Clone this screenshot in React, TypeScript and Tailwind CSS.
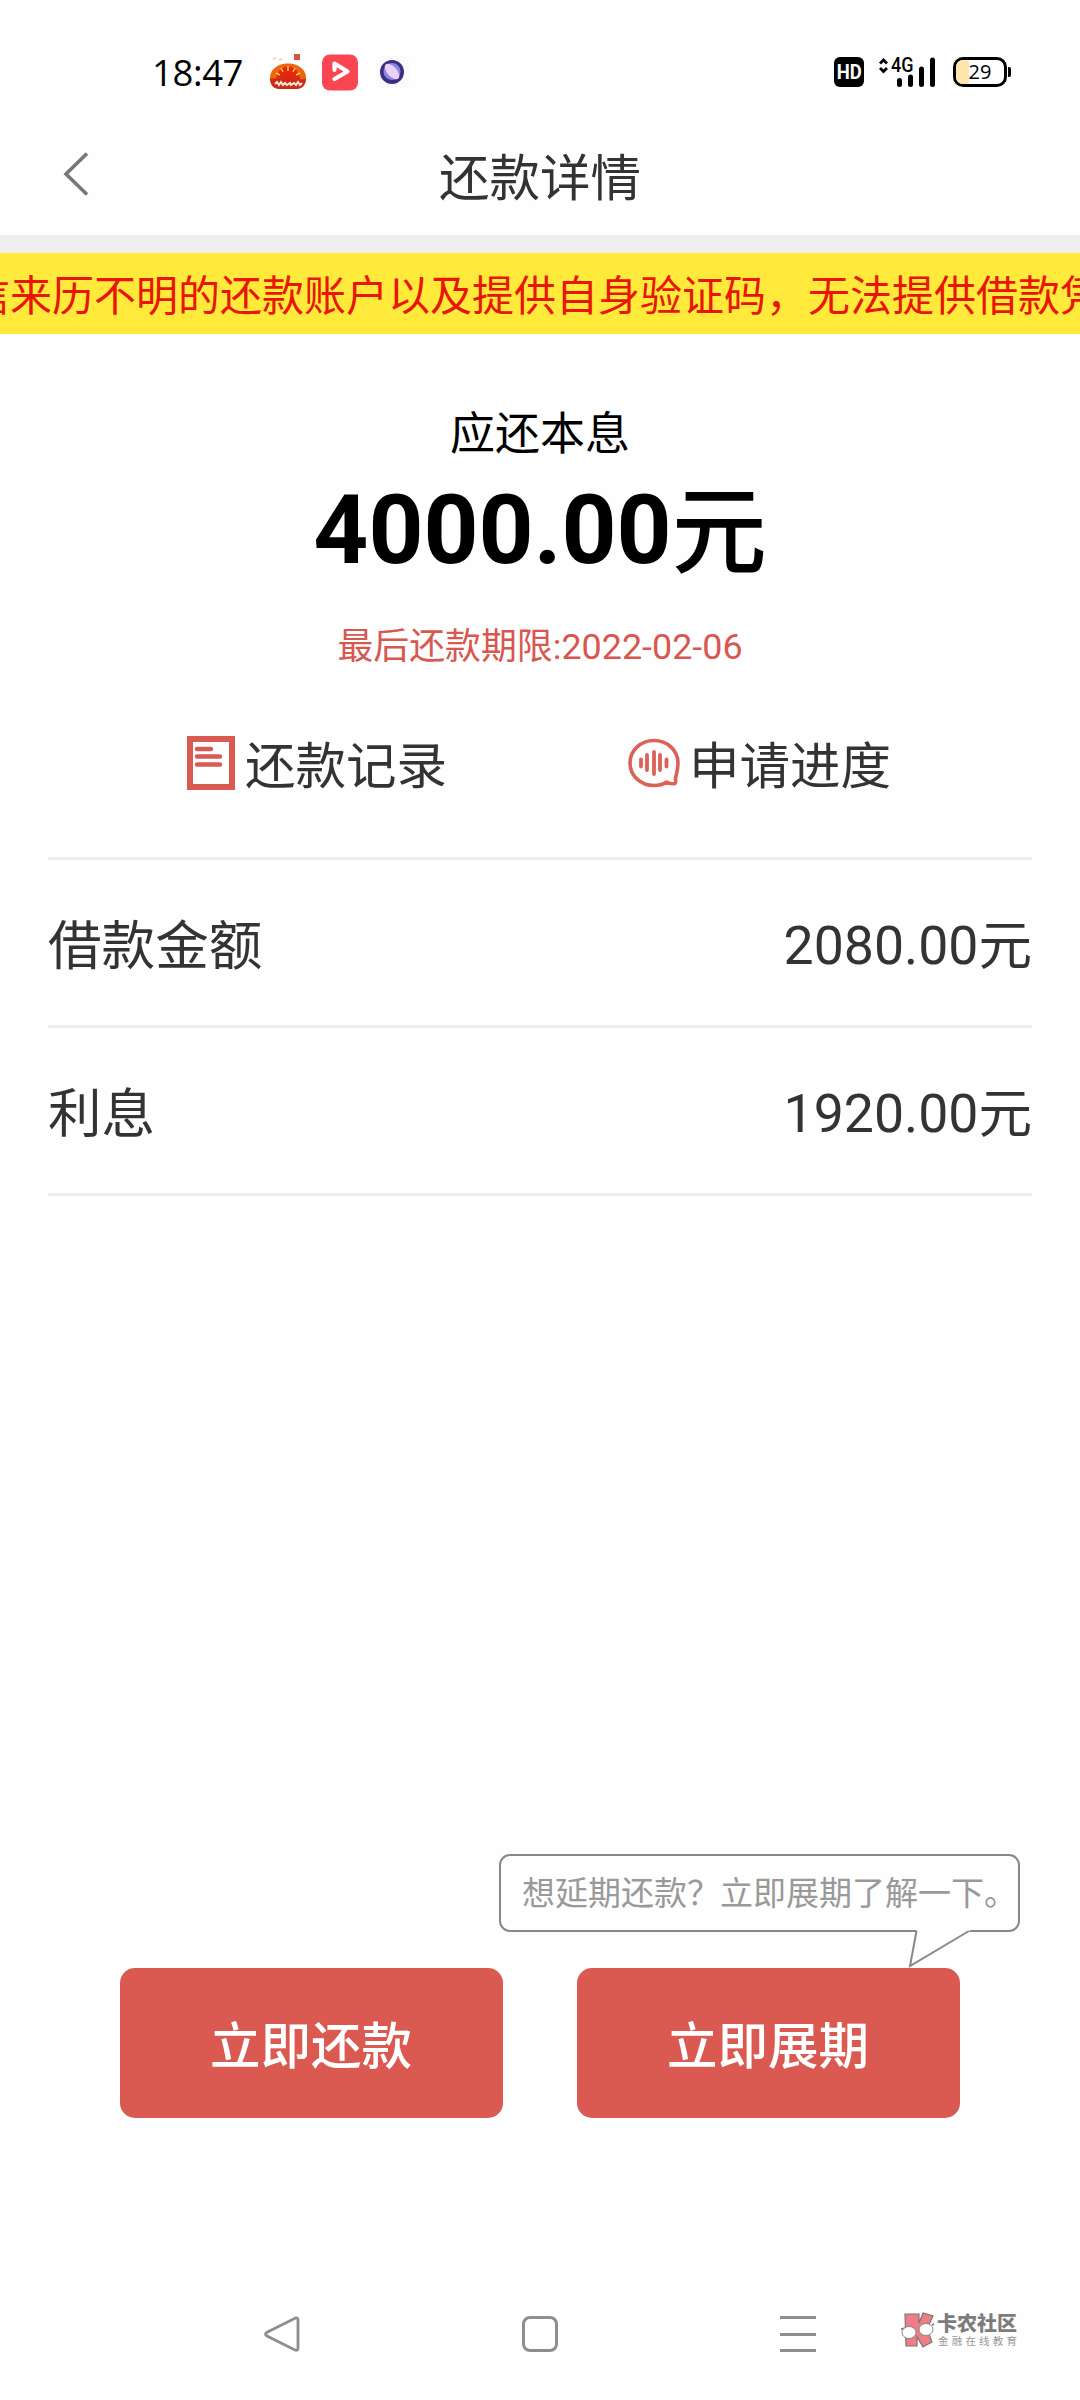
import React from "react";

function StatusBar() {
  return (
    <div className="flex h-[144px] items-center pr-[69px] pl-[152px]">
      <span className="w-[92px] font-['Open_Sans'] text-[36.500px] leading-[44px] font-normal tracking-[-0.400px] whitespace-nowrap text-black">18:47</span>
      <svg className="ml-[24px]" width="40" height="44" viewBox="0 0 40 44">
        <rect x="26" y="4" width="6" height="6" fill="#d2563a" />
        <path d="M5 9l3-1M11 10l3-1" stroke="#f3c9a0" strokeWidth="1.5" />
        <path d="M2 30C0 8 40 8 38 30z" fill="#f0640f" />
        <path d="M8 30C9 12 31 12 32 30z" fill="#e3260d" />
        <path d="M20 16v5M13 18l2 4M27 18l-2 4M8 23l4 2M32 23l-4 2" stroke="#ffd24a" strokeWidth="1.5" />
        <path d="M2 29c6-2 8 1 12 0s8-1 12 0 8 0 12 0c0 6-4 10-9 10H11C6 39 2 35 2 29z" fill="#cf281c" />
        <path d="M7 34l2-2 2 3 2-3 2 3 2-2 2 2 3-2 1 2 3-2 2 2 2-3 2 3 2-2" stroke="#ffe9d0" strokeWidth="2" fill="none" />
      </svg>
      <svg className="ml-[13px]" width="38" height="38" viewBox="0 0 38 38">
        <rect x="1" y="1.500" width="36" height="36" rx="8" fill="#fa4650" />
        <path d="M13.500 17V10.500L26.500 18.500l-13 7.500" fill="none" stroke="#fff" strokeWidth="4.200" strokeLinejoin="round" strokeLinecap="round" />
      </svg>
      <svg className="ml-[17px]" width="34" height="36" viewBox="0 0 34 36">
        <rect x="1" y="2" width="32" height="32" rx="8" fill="#faf9fb" />
        <circle cx="16" cy="18" r="12" fill="#3b2f80" />
        <circle cx="16" cy="17.500" r="8.500" fill="#8b87e8" />
        <ellipse cx="16" cy="17.500" rx="9.500" ry="4.800" transform="rotate(48 16 17.500)" fill="#ecd2f8" />
      </svg>

      <div className="ml-auto flex items-center">
        <div className="flex h-[30px] w-[30px] items-center justify-center rounded-[6px] bg-black">
          <span className="scale-x-[0.88] font-['Roboto'] text-[21px] leading-[30px] font-bold text-white">HD</span>
        </div>
        <div className="relative ml-[14px] h-[32px] w-[60px]">
          <svg width="60" height="32" viewBox="0 0 60 32">
            <path d="M2 7.500l3.500-3.500L9 7.500M2 12l3.500 3.500L9 12" fill="none" stroke="#000" strokeWidth="2.800" />
            <path d="M21.500 24.500v4M32.500 21v7.500M43.500 13v15.500M54.500 4v24.500" stroke="#000" strokeWidth="5" strokeLinecap="round" />
          </svg>
          <span className="absolute top-[-1px] left-[13px] origin-left scale-x-[0.9] font-['Roboto'] text-[20px] leading-[20px] font-medium text-black">4G</span>
        </div>
        <div className="relative ml-[15px] flex h-[30px] w-[54px] items-center justify-center overflow-hidden rounded-[10px] border-[3px] border-black">
          <div className="absolute inset-y-0 left-0 w-[13px] bg-[#ffe5ae]" />
          <span className="relative font-['Open_Sans'] text-[20px] leading-[24px] text-black">29</span>
        </div>
        <div className="ml-[1px] h-[10px] w-[3px] rounded-r-[2px] bg-black" />
      </div>
    </div>
  );
}

function RecordIcon() {
  return (
    <svg className="mt-[4px]" width="48" height="54" viewBox="0 0 48 54">
      <rect x="3" y="3" width="42" height="48" fill="#fff" stroke="#d95a51" strokeWidth="6" />
      <path d="M10 13h14M10 20.500h23M10 28.500h23" stroke="#d95a51" strokeWidth="4.400" strokeLinecap="round" />
    </svg>
  );
}

function ProgressIcon() {
  return (
    <svg className="mt-[6px]" width="52" height="50" viewBox="0 0 52 50">
      <path d="M47.500 40C49 34 50 31 50 25C50 12 39 2.500 26 2.500S2 12 2 25s11 22.500 24 22.500c5 0 9-1 12.500-3.500 2 1.500 5 2.200 8.500 1.500 1.200-.5.500-3 .5-5.500z" fill="none" stroke="#dc6157" strokeWidth="3.600" strokeLinejoin="round" />
      <path d="M13 21.500v7M19 17v15M26 14v22M32 17v15M38.500 21.500v7" stroke="#dc6157" strokeWidth="3.800" strokeLinecap="round" />
    </svg>
  );
}

function DetailRow({ label, value, unit }: { label: string; value: string; unit: string }) {
  return (
    <div className="flex h-[168px] items-center justify-between border-t-[3px] border-[#eeeeee] pt-[8px] text-[53.600px] leading-[60px] text-[#333]">
      <span className="pt-[1px]">{label}</span>
      <span className="flex">
        {value}
        <span className="pt-[1px]">{unit}</span>
      </span>
    </div>
  );
}

function ActionButton({ children }: { children: React.ReactNode }) {
  return (
    <button className="h-[150px] w-[383px] rounded-[15px] bg-[#da5a51] pt-[8px] pr-[1px] text-[50.500px] leading-[60px] font-medium text-white">
      {children}
    </button>
  );
}

function NavigationBar() {
  return (
    <div className="flex h-[80px] items-center pl-[262px]">
      <svg width="40" height="40" viewBox="0 0 40 40">
        <path d="M5 18.200L33 4.200q3-1 3 2V34q0 3-3 2L5 22q-3-1.900 0-3.800z" fill="none" stroke="#8e8e8e" strokeWidth="2.800" />
      </svg>
      <div className="ml-[220px] h-[36px] w-[36px] rounded-[8px] border-[3px] border-[#8e8e8e]" />
      <div className="ml-[222px] flex w-[36px] flex-col gap-[13.500px]">
        <div className="h-[3px] bg-[#8e8e8e]" />
        <div className="h-[3px] bg-[#8e8e8e]" />
        <div className="h-[3px] bg-[#8e8e8e]" />
      </div>
      <svg className="mb-[8px] ml-[84px]" width="36" height="38" viewBox="0 0 36 38">
        <path d="M5 3h14v9l4-10 10 3-6 13 5 13-9 5-6-10v9H6z" fill="#ee7d86" stroke="#777" strokeWidth="1.200" />
        <path d="M1 18l4-1M32 14l2-1" stroke="#777" strokeWidth="1.500" />
        <ellipse cx="9" cy="21.500" rx="7" ry="6" fill="#fff" stroke="#888" strokeWidth="1" />
        <ellipse cx="26" cy="18.500" rx="7" ry="6" fill="#fff" stroke="#888" strokeWidth="1" />
      </svg>
      <div className="mb-[6px] ml-[1px] flex flex-col">
        <span className="text-[20px] leading-[22px] font-black whitespace-nowrap text-[#7c7c7c]">卡农社区</span>
        <span className="pl-[1px] text-[10.500px] leading-[14px] tracking-[3.200px] whitespace-nowrap text-[#999]">金融在线教育</span>
      </div>
    </div>
  );
}

export default function App() {
  return (
    <div className="flex h-[2400px] w-[1080px] flex-col overflow-hidden bg-[#fefefe] font-['Roboto','Noto_Sans_CJK_SC',sans-serif]">
      <StatusBar />
      <header className="relative h-[91px] text-center">
        <svg className="absolute top-[6px] left-[60px]" width="32" height="48" viewBox="0 0 32 48">
          <path d="M27 3.500L6 24l21 20.500" fill="none" stroke="#777" strokeWidth="3.600" />
        </svg>
        <h1 className="text-[50.500px] leading-[70px] text-[#333]">还款详情</h1>
      </header>
      <div className="h-[18px] bg-[#eeeeee]" />
      <div className="h-[81px] overflow-hidden bg-[#ffe93b] pt-[14px]">
        <p className="ml-[-32px] text-[42px] leading-[60px] whitespace-nowrap text-[#e81500]">
          信来历不明的还款账户以及提供自身验证码，无法提供借款凭
        </p>
      </div>

      <section className="pt-[71px] text-center">
        <p className="text-[45px] leading-[60px] text-black">应还本息</p>
        <p className="mt-[15px] flex justify-center text-[96px] leading-[100px] font-bold text-black">
          4000.00
          <span className="pt-[4px] text-[95px] font-medium">元</span>
        </p>
        <p className="mt-[38px] text-[35.900px] leading-[50px] text-[#d8574e]">最后还款期限:2022-02-06</p>
      </section>

      <div className="mt-[60px] flex h-[70px] pl-[187px] text-[50.500px] leading-[70px] text-[#333]">
        <div className="flex w-[441px] gap-[10px]">
          <RecordIcon />
          <span>还款记录</span>
        </div>
        <div className="flex gap-[9px]">
          <ProgressIcon />
          <span>申请进度</span>
        </div>
      </div>

      <div className="mx-[48px] mt-[55px] border-b-[3px] border-[#eeeeee]">
        <DetailRow label="借款金额" value="2080.00" unit="元" />
        <DetailRow label="利息" value="1920.00" unit="元" />
      </div>

      <div className="relative mt-auto ml-[499px] h-[78px] w-[521px] rounded-[11px] border-2 border-[#888] pt-[8px] pl-[21px] text-[33px] leading-[60px] whitespace-nowrap text-[#999]">
        想延期还款？立即展期了解一下。
        <svg className="absolute top-[72px] left-[403px]" width="70" height="42" viewBox="0 0 70 42">
          <path d="M13 0L6.500 39 66 3V0z" fill="#fefefe" />
          <path d="M12.500 3L6 38 65 3" fill="none" stroke="#888" strokeWidth="2" />
        </svg>
      </div>
      <div className="mt-[36px] flex gap-[74px] pl-[120px]">
        <ActionButton>立即还款</ActionButton>
        <ActionButton>立即展期</ActionButton>
      </div>

      <div className="mt-[176px] mb-[26px]">
        <NavigationBar />
      </div>
    </div>
  );
}
